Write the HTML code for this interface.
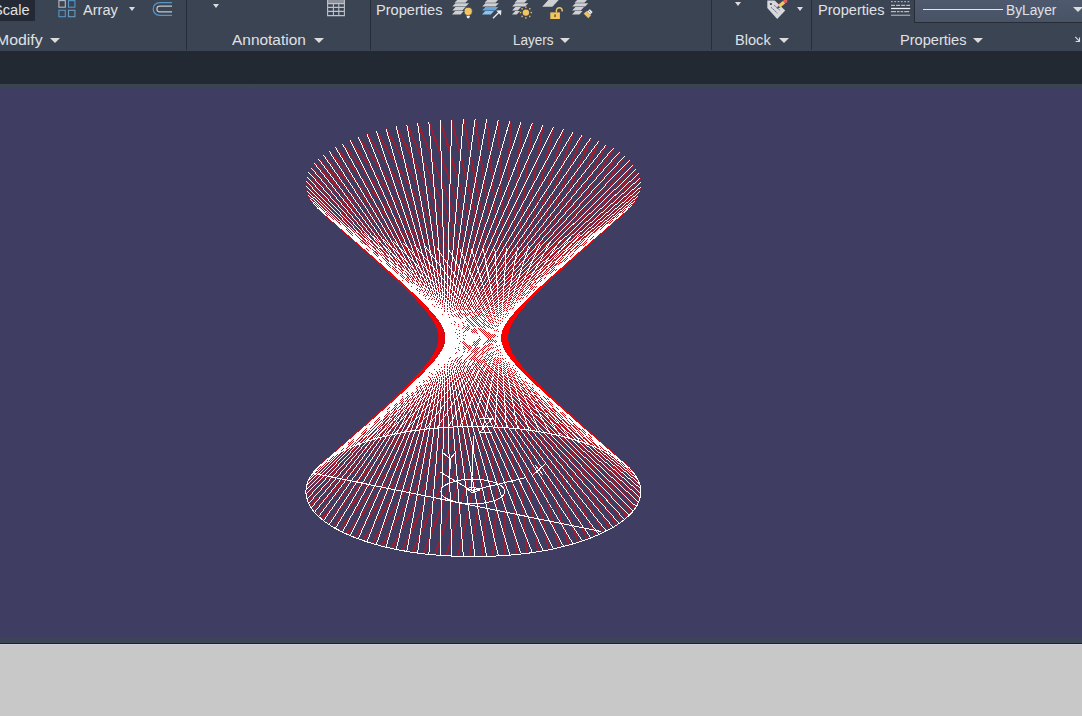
<!DOCTYPE html>
<html><head><meta charset="utf-8"><title>AutoCAD</title>
<style>
html,body{margin:0;padding:0;}
body{width:1082px;height:716px;overflow:hidden;position:relative;background:#3f3d61;font-family:"Liberation Sans",sans-serif;}
#ribbon{position:absolute;left:0;top:0;width:1082px;height:51px;background:#3b4453;overflow:hidden;}
#band{position:absolute;left:0;top:51px;width:1082px;height:33px;background:#222933;}
#strip{position:absolute;left:0;top:84px;width:1082px;height:4.5px;background:linear-gradient(#3b4453,#3b4453 50%,#3f3d61);}
#dwg{position:absolute;left:0;top:0;}
#bstrip{position:absolute;left:0;top:637px;width:1082px;height:6px;background:linear-gradient(#3f3d61,#3c4555 40%,#3d4656);}
#bdark{position:absolute;left:0;top:643px;width:1082px;height:1px;background:#1e222c;}
#blight{position:absolute;left:0;top:644px;width:1082px;height:1px;background:#cdcfd4;}
#bottom{position:absolute;left:0;top:645px;width:1082px;height:71px;background:#c8c8c8;}
.t{position:absolute;color:#e0e1e4;font-size:15.3px;line-height:16px;white-space:nowrap;transform-origin:0 0;}
.r1{top:2.1px;}
.r2{top:31.9px;}
.sep{position:absolute;top:0;width:1px;height:50px;background:#272d39;}
.tri{position:absolute;width:0;height:0;border-left:5px solid transparent;border-right:5px solid transparent;border-top:5px solid #dcdcdc;}
.tris{position:absolute;width:0;height:0;border-left:3.5px solid transparent;border-right:3.5px solid transparent;border-top:4px solid #dcdcdc;}
.ic{position:absolute;}
</style></head><body>
<div id="ribbon">
<div style="position:absolute;left:0;top:0;width:35px;height:21px;background:#232a36;"></div>
<div class="t r1" style="left:-7px;transform:scaleX(0.954);">Scale</div>
<svg class="ic" style="left:58px;top:0px" width="18" height="18" viewBox="0 0 18 18" fill="none" stroke-width="1.1">
<rect x="0.9" y="0.6" width="6.4" height="6.6" stroke="#b4b8c0"/>
<rect x="10.5" y="0.6" width="6.4" height="6.6" stroke="#5596c6"/>
<rect x="0.9" y="10.3" width="6.4" height="6.4" stroke="#5596c6"/>
<rect x="10.5" y="10.3" width="6.4" height="6.4" stroke="#6c9cc0"/>
</svg>
<div class="t r1" style="left:83px;transform:scaleX(0.954);">Array</div>
<div class="tris" style="left:128.5px;top:7px;"></div>
<svg class="ic" style="left:151px;top:1px" width="23" height="16" viewBox="0 0 23 16" fill="none">
<path d="M21 1.7H8.5a6.3 6.3 0 0 0 0 12.6H21" stroke="#5596c6" stroke-width="1.2"/>
<path d="M21 5.2H8.7a2.8 2.8 0 0 0 0 5.6H21" stroke="#c4c7cc" stroke-width="1.2"/>
</svg>
<div class="t r2" style="left:-3.6px;transform:scaleX(1.034);">Modify</div>
<div class="tri" style="left:50px;top:38px;"></div>
<div class="sep" style="left:186px;"></div>

<div class="tris" style="left:213px;top:4px;"></div>
<svg class="ic" style="left:327px;top:0px" width="19" height="17" viewBox="0 0 19 17" fill="none">
<rect x="0" y="0" width="18" height="3.5" fill="#8d919b"/>
<path d="M0.6 0V15.6H17.4V0M0.6 7.4H17.4M0.6 11.4H17.4M6.4 3.5V15.6M11.8 3.5V15.6M0.6 3.6H17.4" stroke="#bfc2c8" stroke-width="1.1"/>
</svg>
<div class="t r2" style="left:232.3px;transform:scaleX(1.009);">Annotation</div>
<div class="tri" style="left:314px;top:38px;"></div>
<div class="sep" style="left:370px;"></div>

<div class="t r1" style="left:376.3px;transform:scaleX(0.954);">Properties</div>
<div class="t r2" style="left:512.5px;transform:scaleX(0.882);">Layers</div>
<div class="tri" style="left:560px;top:38px;"></div>
<div class="sep" style="left:711px;"></div>

<div class="tris" style="left:734.5px;top:2px;"></div>
<div class="tris" style="left:797px;top:7px;"></div>
<div class="t r2" style="left:734.7px;transform:scaleX(0.954);">Block</div>
<div class="tri" style="left:778.5px;top:38px;"></div>
<div class="sep" style="left:811px;"></div>

<div class="t r1" style="left:817.5px;transform:scaleX(0.954);">Properties</div>
<div style="position:absolute;left:914px;top:-1px;width:170px;height:22px;background:linear-gradient(#4f596d,#495366);border:1px solid #262c38;"></div>
<div style="position:absolute;left:923px;top:9px;width:80px;height:1px;background:#e4e4e6;"></div>
<div class="t r1" style="left:1005.5px;transform:scaleX(0.898);">ByLayer</div>
<div class="tri" style="left:1072.5px;top:7px;"></div>
<div class="t r2" style="left:899.6px;transform:scaleX(0.954);">Properties</div>
<div class="tri" style="left:973px;top:38px;"></div>
<svg class="ic" style="left:0;top:0" width="1082" height="51" viewBox="0 0 1082 51">
<path fill="#cfd0d4" d="M457.7 -0.6L468.5 -0.6L465.3 2.8L454.5 2.8Z"/>
<path fill="#cfd0d4" d="M455.5 3.3L469.0 3.3L465.8 6.6L452.3 6.6Z"/>
<path fill="#cfd0d4" d="M455.5 7.1L465.5 7.1L462.3 10.5L452.3 10.5Z"/>
<path fill="#cfd0d4" d="M455.2 11.0L463.8 11.0L460.6 14.5L452.0 14.5Z"/>
<circle cx="468.2" cy="11.4" r="4.1" fill="#f2c562" stroke="#3b4453" stroke-width="0.8"/>
<path fill="#ececee" d="M466.4 15.8H470L469.2 18.2H467.2Z"/>
<path fill="#cfd0d4" d="M487.7 -0.6L498.6 -0.6L495.4 2.8L484.5 2.8Z"/>
<path fill="#cfd0d4" d="M485.4 3.3L498.8 3.3L495.6 6.6L482.2 6.6Z"/>
<path fill="#62a8e0" d="M485.4 7.1L498.4 7.1L495.2 10.5L482.2 10.5Z"/>
<path fill="#8fc3ee" d="M485.2 11.0L494.0 11.0L490.8 14.5L482.0 14.5Z"/>
<path d="M493 18.2L499.2 12" stroke="#ececee" stroke-width="1.3" fill="none"/>
<path d="M496.2 10.6L501.4 10.2L501 15.4Z" fill="#ececee"/>
<path fill="#cfd0d4" d="M517.7 -0.6L527.6 -0.6L524.4 2.8L514.5 2.8Z"/>
<path fill="#cfd0d4" d="M515.3 3.3L528.3 3.3L525.1 6.6L512.1 6.6Z"/>
<path fill="#cfd0d4" d="M515.3 7.1L521.0 7.1L517.8 10.5L512.1 10.5Z"/>
<path fill="#cfd0d4" d="M515.2 11.0L520.0 11.0L516.8 14.5L512.0 14.5Z"/>
<circle cx="525.9" cy="12.6" r="3.2" fill="#f2c562"/>
<rect x="530.5" y="11.8" width="1.5" height="1.5" fill="#d9b35e"/>
<rect x="529.0" y="15.7" width="1.5" height="1.5" fill="#d9b35e"/>
<rect x="525.1" y="17.2" width="1.5" height="1.5" fill="#d9b35e"/>
<rect x="521.3" y="15.7" width="1.5" height="1.5" fill="#d9b35e"/>
<rect x="519.8" y="11.8" width="1.5" height="1.5" fill="#d9b35e"/>
<rect x="521.3" y="8.0" width="1.5" height="1.5" fill="#d9b35e"/>
<rect x="525.1" y="6.4" width="1.5" height="1.5" fill="#d9b35e"/>
<rect x="529.0" y="8.0" width="1.5" height="1.5" fill="#d9b35e"/>
<path fill="#cfd0d4" d="M549.2 -1L559.6 -1L552.4 6.7L542.2 6.7Z"/>
<rect x="550.3" y="12.4" width="9.6" height="6.6" fill="#f2c562"/>
<rect x="554.4" y="14.3" width="1.3" height="2.8" fill="#5a4a20"/>
<path d="M556.4 12.4V10.6a2.9 2.9 0 0 1 5.8 0V11.6" stroke="#f2c562" stroke-width="1.4" fill="none"/>
<path fill="#cfd0d4" d="M577.7 -0.6L587.6 -0.6L584.4 2.8L574.5 2.8Z"/>
<path fill="#cfd0d4" d="M575.4 3.3L588.3 3.3L585.1 6.6L572.2 6.6Z"/>
<path fill="#cfd0d4" d="M575.4 7.1L584.0 7.1L580.8 10.5L572.2 10.5Z"/>
<path fill="#cfd0d4" d="M575.2 11.0L582.6 11.0L579.4 14.5L572.0 14.5Z"/>
<g transform="rotate(45 587.4 14.6)"><rect x="584" y="12.6" width="6.8" height="4.2" fill="#f2c562" stroke="#3b4453" stroke-width="0.6"/></g>
<path d="M587 11.6L589.8 9.2L592.6 12L590.2 14.8Z" fill="#ececee"/>
<path d="M588.6 10.6L590.4 12.4" stroke="#3b4453" stroke-width="0.7"/>
<path fill="#d8d9dc" d="M767.3 0.6H774.7L785.2 10.4L777.2 19L767.3 8Z"/>
<circle cx="770.9" cy="4" r="1.1" fill="#3b4453"/>
<path d="M771.3 7.5L777.6 13.3M774.3 5.4L780.5 10.8" stroke="#4a5060" stroke-width="1" stroke-dasharray="1.6 1.1" fill="none"/>
<path d="M779 6.4L784.2 2" stroke="#f2c562" stroke-width="3.4" fill="none"/>
<path d="M776.6 8.8L778.2 5.8L780.2 7.8Z" fill="#4a5060"/>
<circle cx="785.4" cy="1" r="2" fill="#e8605c"/>
<path d="M891 1.6H910" stroke="#a9acb4" stroke-width="1.2" stroke-dasharray="1.8 1.5" fill="none"/>
<path d="M891 5.4H910" stroke="#b9bbc1" stroke-width="1.3" stroke-dasharray="4 1.1" fill="none"/>
<path d="M891 8.5H910.2" stroke="#f0f0f2" stroke-width="1.3" fill="none"/>
<path d="M891 11.6H910" stroke="#b9bbc1" stroke-width="1.3" stroke-dasharray="5 1 2.6 1 2.6 1 5 1" fill="none"/>
<path d="M891 15.3H910.2" stroke="#979ba6" stroke-width="1.4" fill="none"/>
<path d="M1075.3 36.9L1079.3 41.2M1075.6 41.5H1080M1079.5 37.4V42" stroke="#dcdce0" stroke-width="1.1" fill="none"/>
</svg>
</div>
<div id="band"></div>
<div id="strip"></div>
<svg id="dwg" width="1082" height="716" viewBox="0 0 1082 716" shape-rendering="crispEdges" fill="none">
<g stroke="#ff0000" stroke-opacity="0.48" stroke-width="2"><path d="M640.75 182.61L321.25 518.86"/><path d="M640.06 178.08L326.52 522.91"/><path d="M638.55 173.58L332.51 526.81"/><path d="M636.24 169.14L339.18 530.54"/><path d="M633.14 164.76L346.5 534.07"/><path d="M629.25 160.48L354.45 537.4"/><path d="M624.61 156.32L362.97 540.51"/><path d="M619.23 152.29L372.03 543.37"/><path d="M613.14 148.42L381.58 545.99"/><path d="M606.36 144.72L391.58 548.34"/><path d="M598.94 141.21L401.98 550.41"/><path d="M590.91 137.92L412.73 552.2"/><path d="M582.3 134.85L423.77 553.69"/><path d="M573.17 132.02L435.05 554.88"/><path d="M563.54 129.44L446.52 555.76"/><path d="M553.48 127.13L458.12 556.33"/><path d="M543.03 125.1L469.79 556.59"/><path d="M532.23 123.36L481.48 556.52"/><path d="M521.15 121.91L493.13 556.14"/><path d="M509.84 120.77L504.69 555.45"/><path d="M498.35 119.93L516.09 554.44"/><path d="M486.73 119.41L527.28 553.13"/><path d="M475.05 119.2L538.21 551.52"/><path d="M463.37 119.31L548.82 549.62"/><path d="M451.73 119.74L559.07 547.43"/><path d="M440.19 120.48L568.89 544.97"/><path d="M428.82 121.53L578.26 542.26"/><path d="M417.66 122.89L587.11 539.29"/><path d="M406.78 124.55L595.4 536.1"/><path d="M396.22 126.49L603.1 532.68"/><path d="M386.03 128.72L610.17 529.07"/><path d="M376.27 131.22L616.57 525.27"/><path d="M366.98 133.97L622.28 521.31"/><path d="M358.21 136.97L627.26 517.21"/><path d="M350 140.2L631.48 512.98"/><path d="M342.4 143.65L634.94 508.64"/><path d="M335.42 147.29L637.61 504.23"/><path d="M329.13 151.11L639.48 499.75"/><path d="M323.53 155.1L640.54 495.23"/><path d="M318.66 159.22L640.78 490.69"/><path d="M314.55 163.47L640.21 486.16"/><path d="M311.21 167.82L638.83 481.66"/><path d="M308.66 172.24L636.64 477.2"/><path d="M306.91 176.73L633.65 472.81"/><path d="M305.97 181.25L629.88 468.52"/><path d="M305.85 185.79L625.35 464.34"/><path d="M306.54 190.32L620.08 460.29"/><path d="M308.05 194.82L614.09 456.39"/><path d="M310.36 199.26L607.42 452.66"/><path d="M313.46 203.64L600.1 449.13"/><path d="M317.35 207.92L592.15 445.8"/><path d="M321.99 212.08L583.63 442.69"/><path d="M327.37 216.11L574.57 439.83"/><path d="M333.46 219.98L565.02 437.21"/><path d="M340.24 223.68L555.02 434.86"/><path d="M347.66 227.19L544.62 432.79"/><path d="M355.69 230.48L533.87 431"/><path d="M364.3 233.55L522.83 429.51"/><path d="M373.43 236.38L511.55 428.32"/><path d="M383.06 238.96L500.08 427.44"/><path d="M393.12 241.27L488.48 426.87"/><path d="M403.57 243.3L476.81 426.61"/><path d="M414.37 245.04L465.12 426.68"/><path d="M425.45 246.49L453.47 427.06"/><path d="M436.76 247.63L441.91 427.75"/><path d="M448.25 248.47L430.51 428.76"/><path d="M459.87 248.99L419.32 430.07"/><path d="M471.55 249.2L408.39 431.68"/><path d="M483.23 249.09L397.78 433.58"/><path d="M494.87 248.66L387.53 435.77"/><path d="M506.41 247.92L377.71 438.23"/><path d="M517.78 246.87L368.34 440.94"/><path d="M528.94 245.51L359.49 443.91"/><path d="M539.82 243.85L351.2 447.1"/><path d="M550.38 241.91L343.5 450.52"/><path d="M560.57 239.68L336.43 454.13"/><path d="M570.33 237.18L330.03 457.93"/><path d="M579.62 234.43L324.32 461.89"/><path d="M588.39 231.43L319.34 465.99"/><path d="M596.6 228.2L315.12 470.22"/><path d="M604.2 224.75L311.66 474.56"/><path d="M611.18 221.11L308.99 478.97"/><path d="M617.47 217.29L307.12 483.45"/><path d="M623.07 213.3L306.06 487.97"/><path d="M627.94 209.18L305.82 492.51"/><path d="M632.05 204.93L306.39 497.04"/><path d="M635.39 200.58L307.77 501.54"/><path d="M637.94 196.16L309.96 506"/><path d="M639.69 191.67L312.95 510.39"/><path d="M640.63 187.15L316.72 514.68"/></g>
<path fill="#ffffff" d="M640.75 182.11V183.11L313.46 472.66V471.66ZM640.06 177.58V178.58L310.36 477.04V476.04ZM638.55 173.08V174.08L308.05 481.48V480.48ZM636.24 168.64V169.64L306.54 485.98V484.98ZM633.14 164.26V165.26L305.85 490.51V489.51ZM628.75 160.48H629.75L306.47 494.55H305.47ZM624.11 156.32H625.11L307.41 499.07H306.41ZM618.73 152.29H619.73L309.16 503.56H308.16ZM612.64 148.42H613.64L311.71 507.98H310.71ZM605.86 144.72H606.86L315.05 512.33H314.05ZM598.44 141.21H599.44L319.16 516.58H318.16ZM590.41 137.92H591.41L324.03 520.7H323.03ZM581.8 134.85H582.8L329.63 524.69H328.63ZM572.67 132.02H573.67L335.92 528.51H334.92ZM563.04 129.44H564.04L342.9 532.15H341.9ZM552.98 127.13H553.98L350.5 535.6H349.5ZM542.53 125.1H543.53L358.71 538.83H357.71ZM531.73 123.36H532.73L367.48 541.83H366.48ZM520.65 121.91H521.65L376.77 544.58H375.77ZM509.34 120.77H510.34L386.53 547.08H385.53ZM497.85 119.93H498.85L396.72 549.31H395.72ZM486.23 119.41H487.23L407.28 551.25H406.28ZM474.55 119.2H475.55L418.16 552.91H417.16ZM462.87 119.31H463.87L429.32 554.27H428.32ZM451.23 119.74H452.23L440.69 555.32H439.69ZM439.69 120.48H440.69L452.23 556.06H451.23ZM428.32 121.53H429.32L463.87 556.49H462.87ZM417.16 122.89H418.16L475.55 556.6H474.55ZM406.28 124.55H407.28L487.23 556.39H486.23ZM395.72 126.49H396.72L498.85 555.87H497.85ZM385.53 128.72H386.53L510.34 555.03H509.34ZM375.77 131.22H376.77L521.65 553.89H520.65ZM366.48 133.97H367.48L532.73 552.44H531.73ZM357.71 136.97H358.71L543.53 550.7H542.53ZM349.5 140.2H350.5L553.98 548.67H552.98ZM341.9 143.65H342.9L564.04 546.36H563.04ZM334.92 147.29H335.92L573.67 543.78H572.67ZM328.63 151.11H329.63L582.8 540.95H581.8ZM323.03 155.1H324.03L591.41 537.88H590.41ZM318.16 159.22H319.16L599.44 534.59H598.44ZM314.05 163.47H315.05L606.86 531.08H605.86ZM310.71 167.82H311.71L613.64 527.38H612.64ZM308.16 172.24H309.16L619.73 523.51H618.73ZM306.41 176.73H307.41L625.11 519.48H624.11ZM305.47 181.25H306.47L629.75 515.32H628.75ZM305.85 186.29V185.29L633.14 510.54V511.54ZM306.54 190.82V189.82L636.24 506.16V507.16ZM308.05 195.32V194.32L638.55 501.72V502.72ZM310.36 199.76V198.76L640.06 497.22V498.22ZM313.46 204.14V203.14L640.75 492.69V493.69ZM317.35 208.42V207.42L640.63 488.15V489.15ZM321.99 212.58V211.58L639.69 483.63V484.63ZM327.37 216.61V215.61L637.94 479.14V480.14ZM333.46 220.48V219.48L635.39 474.72V475.72ZM340.24 224.18V223.18L632.05 470.37V471.37ZM347.66 227.69V226.69L627.94 466.12V467.12ZM355.69 230.98V229.98L623.07 462V463ZM364.3 234.05V233.05L617.47 458.01V459.01ZM373.43 236.88V235.88L611.18 454.19V455.19ZM383.06 239.46V238.46L604.2 450.55V451.55ZM392.62 241.27H393.62L597.1 447.6H596.1ZM403.07 243.3H404.07L588.89 444.37H587.89ZM413.87 245.04H414.87L580.12 441.37H579.12ZM424.95 246.49H425.95L570.83 438.62H569.83ZM436.26 247.63H437.26L561.07 436.12H560.07ZM447.75 248.47H448.75L550.88 433.89H549.88ZM459.37 248.99H460.37L540.32 431.95H539.32ZM471.05 249.2H472.05L529.44 430.29H528.44ZM482.73 249.09H483.73L518.28 428.93H517.28ZM494.37 248.66H495.37L506.91 427.88H505.91ZM505.91 247.92H506.91L495.37 427.14H494.37ZM517.28 246.87H518.28L483.73 426.71H482.73ZM528.44 245.51H529.44L472.05 426.6H471.05ZM539.32 243.85H540.32L460.37 426.81H459.37ZM549.88 241.91H550.88L448.75 427.33H447.75ZM560.07 239.68H561.07L437.26 428.17H436.26ZM569.83 237.18H570.83L425.95 429.31H424.95ZM579.12 234.43H580.12L414.87 430.76H413.87ZM587.89 231.43H588.89L404.07 432.5H403.07ZM596.1 228.2H597.1L393.62 434.53H392.62ZM604.2 224.25V225.25L383.06 437.34V436.34ZM611.18 220.61V221.61L373.43 439.92V438.92ZM617.47 216.79V217.79L364.3 442.75V441.75ZM623.07 212.8V213.8L355.69 445.82V444.82ZM627.94 208.68V209.68L347.66 449.11V448.11ZM632.05 204.43V205.43L340.24 452.62V451.62ZM635.39 200.08V201.08L333.46 456.32V455.32ZM637.94 195.66V196.66L327.37 460.19V459.19ZM639.69 191.17V192.17L321.99 464.22V463.22ZM640.63 186.65V187.65L317.35 468.38V467.38Z"/>
<ellipse cx="473.3" cy="491.6" rx="167.5" ry="65" stroke="#fff" stroke-width="1"/>
<ellipse cx="472.8" cy="491.5" rx="32" ry="12.3" stroke="#fff" stroke-width="1"/>
<path stroke="#fff" stroke-width="1" d="M313.6 473.3L601 531.5"/>
<path stroke="#fff" stroke-width="1" d="M471.5 490.5L473.5 436M471.5 490.5L440.5 472.3M471.5 490.5L525.6 477.7M466.5 488.5L474 487L480 490L472 492.5ZM480 418.5L492 418.5L480 432L492 432M443.5 453L450 459L455 453M450 459L450 469M532 476L545 464M535 465L543 475"/>
</svg>
<div id="bstrip"></div><div id="bdark"></div><div id="blight"></div><div id="bottom"></div>
</body></html>
